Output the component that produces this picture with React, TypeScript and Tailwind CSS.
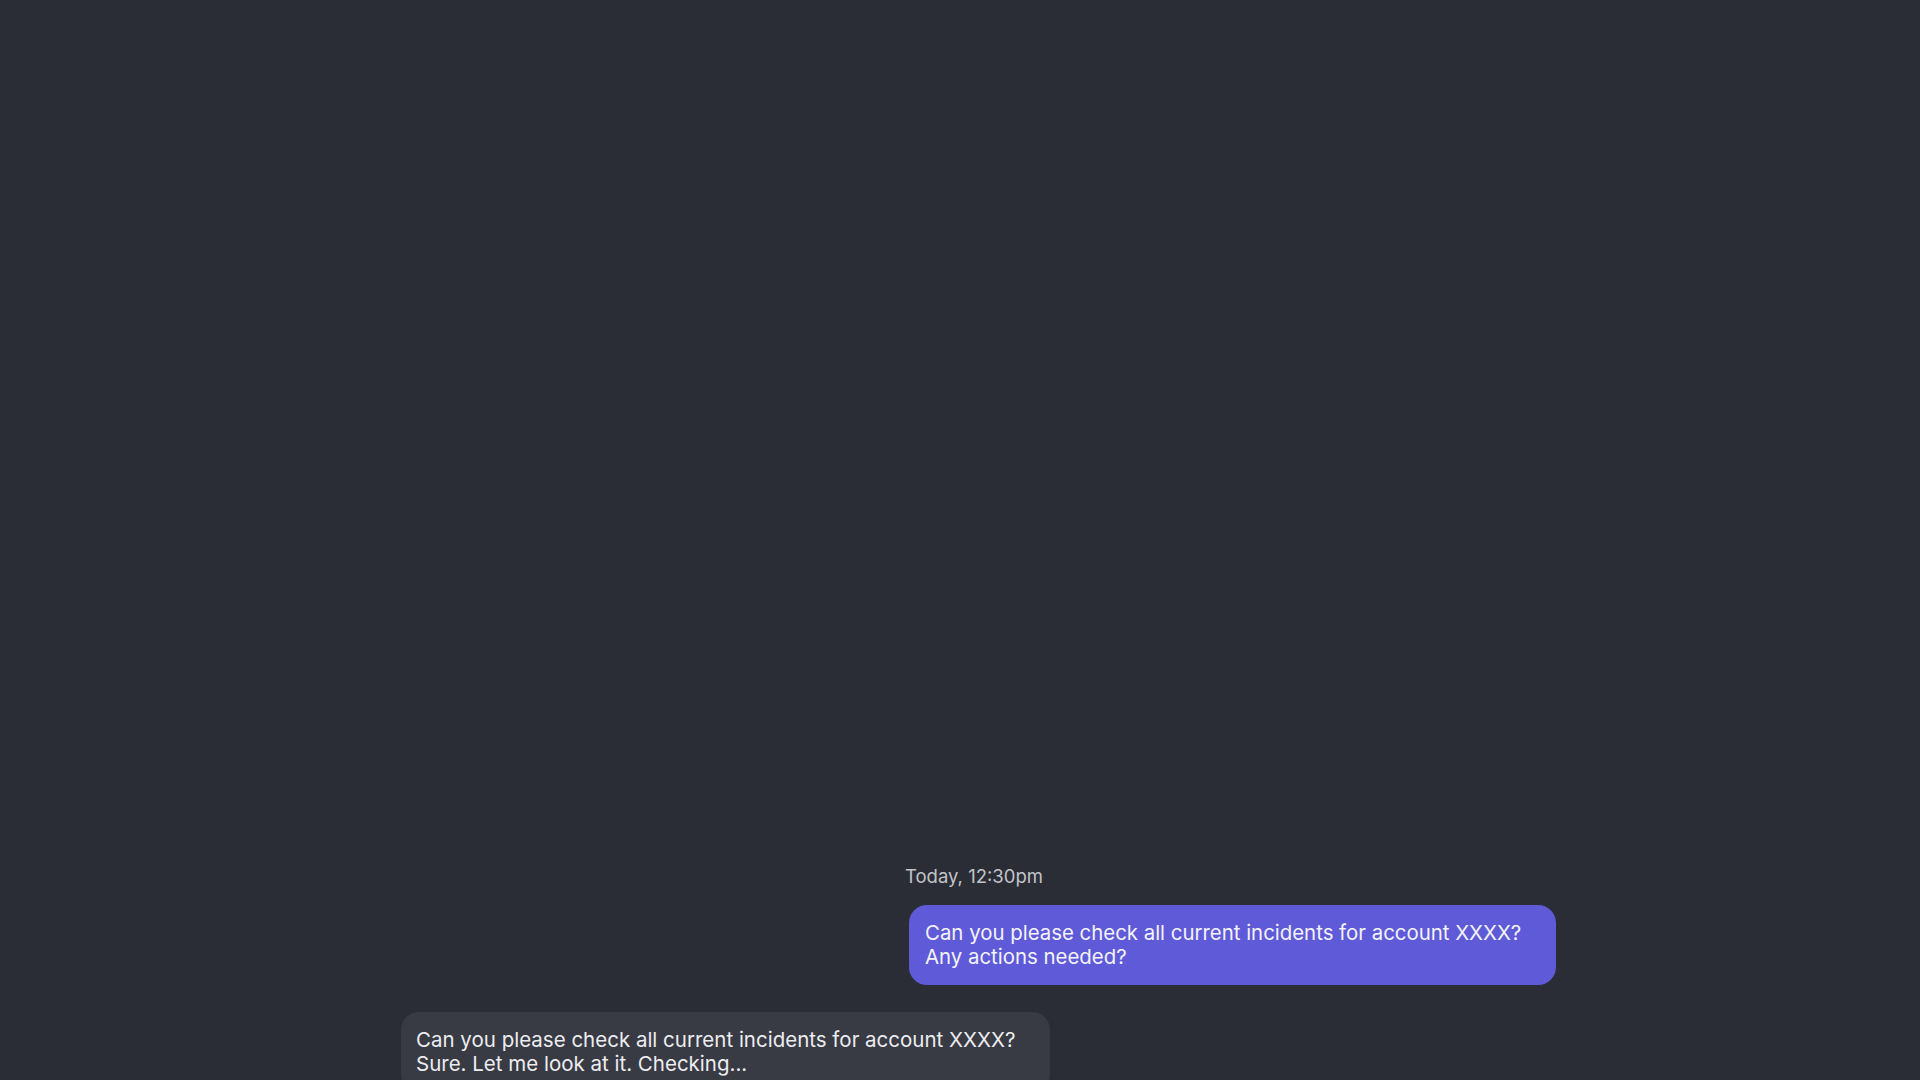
export default function App() {
  return (
    <div
      className="h-screen w-full overflow-hidden bg-[#2b2d36] text-white"
      style={{ fontFamily: "Inter, 'Liberation Sans', sans-serif" }}
    >
      <div className="ml-[401px] flex w-[1155px] flex-col pt-[864px]">
        {/* outgoing */}
        <div className="flex flex-col items-end">
          <div className="flex w-[647px] flex-col">
            <div className="-ml-[4px] text-[18.5px] leading-6 text-[#c2c3c8]">Today, 12:30pm</div>
            <div className="mt-[17px] rounded-[18px] bg-[#5f5ad7] px-4 py-4 text-[20.4px] leading-6 text-[#f3f3f8]">
              Can you please check all current incidents for account XXXX?
              <br />
              Any actions needed?
            </div>
          </div>
        </div>

        {/* reply */}
        <div className="mt-[27px] flex">
          <div className="w-[649px] rounded-[18px] bg-[#383a44] py-4 pl-[15px] pr-4 text-[20.5px] leading-6 text-[#ededf0]">
            Can you please check all current incidents for account XXXX?
            <br />
            Sure. Let me look at it. Checking...
          </div>
        </div>
      </div>
    </div>
  );
}
